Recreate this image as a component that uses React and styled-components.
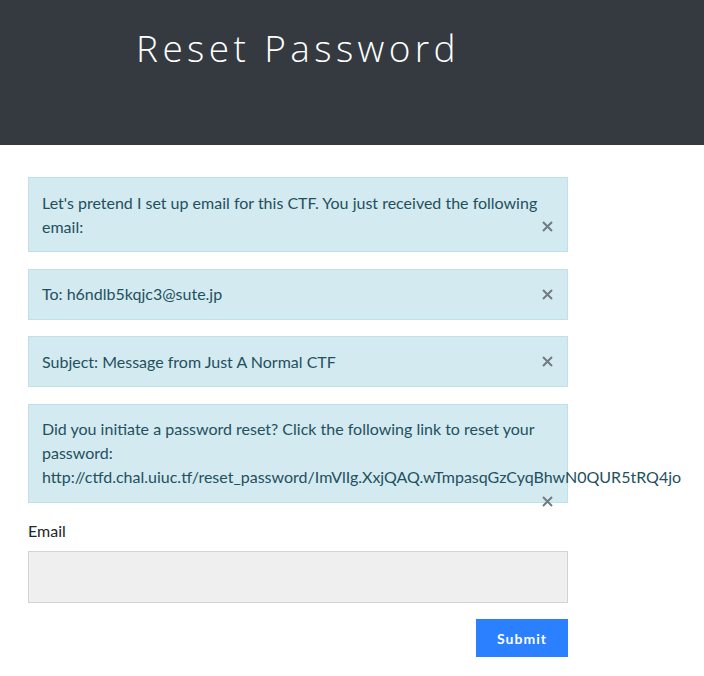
import React from 'react';
import styled, { createGlobalStyle } from 'styled-components';

const GlobalStyle = createGlobalStyle`
  html, body {
    margin: 0;
    padding: 0;
    background: #fff;
    font-family: Lato, "Liberation Sans", sans-serif;
    font-size: 16px;
    color: #212529;
  }
  * { box-sizing: border-box; }
`;

const Jumbotron = styled.header`
  height: 145px;
  background: #343a40;
  padding: 26px 0 0 136px;
`;

const Title = styled.h1`
  margin: 0;
  font-family: "Open Sans", Lato, sans-serif;
  font-weight: 300;
  font-size: 37px;
  line-height: 1.2;
  letter-spacing: 4.4px;
  color: #fff;
`;

const Content = styled.main`
  width: 540px;
  margin: 32px 0 0 28px;
`;

const Alert = styled.div`
  background: #d3eaf1;
  border: 1px solid #bfe2ea;
  color: #24505d;
  padding: 12.5px 13px;
  margin-bottom: 16.5px;
  line-height: 24px;
  font-size: 16px;
`;

const Close = styled.span`
  float: right;
  height: 24px;
  width: 13px;
  display: flex;
  align-items: center;
  justify-content: center;
  color: #727b80;
`;

const Label = styled.label`
  display: block;
  line-height: 24px;
  margin-bottom: 8px;
  color: #212529;
`;

const Input = styled.input`
  display: block;
  width: 100%;
  height: 52px;
  background: #efefef;
  border: 1px solid #cfd4d9;
  border-radius: 0;
  margin-bottom: 16px;
  font: inherit;
  padding: 0 12px;
  outline: none;
`;

const Actions = styled.div`
  display: flex;
  justify-content: flex-end;
`;

const SubmitButton = styled.button`
  width: 92px;
  height: 38px;
  border: none;
  border-radius: 0;
  background: #2b80ff;
  color: #fff;
  font-family: Lato, "Liberation Sans", sans-serif;
  font-weight: 700;
  font-size: 14px;
  letter-spacing: 1px;
  cursor: pointer;
`;

const CloseIcon = () => (
  <svg width="11" height="11" viewBox="0 0 11 11">
    <path d="M1 1 L10 10 M10 1 L1 10" stroke="currentColor" strokeWidth="2" />
  </svg>
);

const messages = [
  "Let's pretend I set up email for this CTF. You just received the following email:",
  'To: h6ndlb5kqjc3@sute.jp',
  'Subject: Message from Just A Normal CTF',
  'Did you initiate a password reset? Click the following link to reset your password: http://ctfd.chal.uiuc.tf/reset_password/ImVlIg.XxjQAQ.wTmpasqGzCyqBhwN0QUR5tRQ4jo',
];

export default function App() {
  return (
    <>
      <GlobalStyle />
      <Jumbotron>
        <Title>Reset Password</Title>
      </Jumbotron>
      <Content>
        {messages.map((msg, i) => (
          <Alert key={i}>
            {msg}
            <Close><CloseIcon /></Close>
          </Alert>
        ))}
        <form onSubmit={(e) => e.preventDefault()}>
          <Label htmlFor="email">Email</Label>
          <Input id="email" type="email" />
          <Actions>
            <SubmitButton type="submit">Submit</SubmitButton>
          </Actions>
        </form>
      </Content>
    </>
  );
}
